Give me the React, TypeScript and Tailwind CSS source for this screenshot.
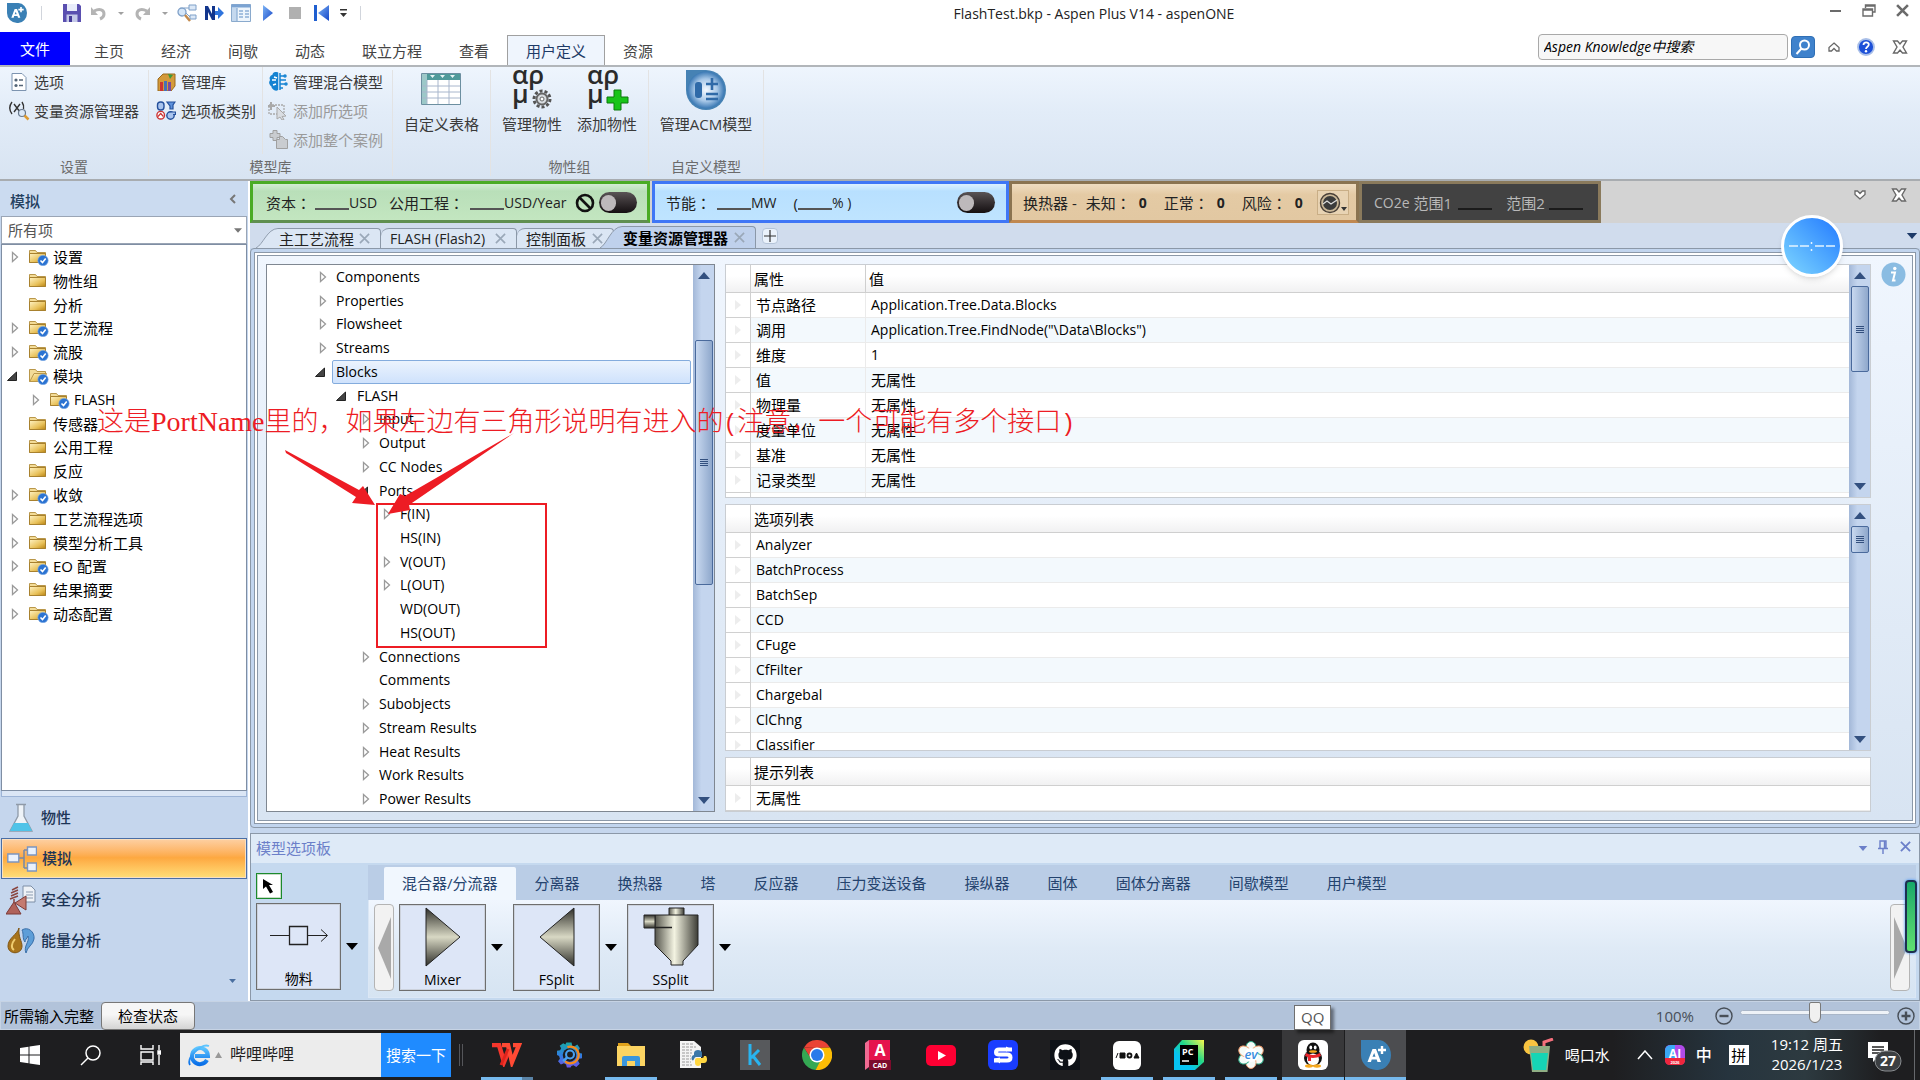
import type { ReactNode } from "react";
import clsx from "clsx";
import { FaGithub } from "react-icons/fa";

interface TreeNode {
  label: string;
  level: number;
  state?: "closed" | "open";
  checked?: boolean;
  selected?: boolean;
}

const ribbonTabs = ["主页", "经济", "间歇", "动态", "联立方程", "查看", "用户定义", "资源"];

const navTree: TreeNode[] = [
  { label: "设置", level: 0, state: "closed", checked: true },
  { label: "物性组", level: 0 },
  { label: "分析", level: 0 },
  { label: "工艺流程", level: 0, state: "closed", checked: true },
  { label: "流股", level: 0, state: "closed", checked: true },
  { label: "模块", level: 0, state: "open", checked: true },
  { label: "FLASH", level: 1, state: "closed", checked: true },
  { label: "传感器", level: 0 },
  { label: "公用工程", level: 0 },
  { label: "反应", level: 0 },
  { label: "收敛", level: 0, state: "closed", checked: true },
  { label: "工艺流程选项", level: 0, state: "closed" },
  { label: "模型分析工具", level: 0, state: "closed" },
  { label: "EO 配置", level: 0, state: "closed", checked: true },
  { label: "结果摘要", level: 0, state: "closed" },
  { label: "动态配置", level: 0, state: "closed", checked: true },
];

const variableTree: TreeNode[] = [
  { label: "Components", level: 0, state: "closed" },
  { label: "Properties", level: 0, state: "closed" },
  { label: "Flowsheet", level: 0, state: "closed" },
  { label: "Streams", level: 0, state: "closed" },
  { label: "Blocks", level: 0, state: "open", selected: true },
  { label: "FLASH", level: 1, state: "open" },
  { label: "Input", level: 2, state: "closed" },
  { label: "Output", level: 2, state: "closed" },
  { label: "CC Nodes", level: 2, state: "closed" },
  { label: "Ports", level: 2, state: "open" },
  { label: "F(IN)", level: 3, state: "closed" },
  { label: "HS(IN)", level: 3 },
  { label: "V(OUT)", level: 3, state: "closed" },
  { label: "L(OUT)", level: 3, state: "closed" },
  { label: "WD(OUT)", level: 3 },
  { label: "HS(OUT)", level: 3 },
  { label: "Connections", level: 2, state: "closed" },
  { label: "Comments", level: 2 },
  { label: "Subobjects", level: 2, state: "closed" },
  { label: "Stream Results", level: 2, state: "closed" },
  { label: "Heat Results", level: 2, state: "closed" },
  { label: "Work Results", level: 2, state: "closed" },
  { label: "Power Results", level: 2, state: "closed" },
];

const properties = [
  ["节点路径", "Application.Tree.Data.Blocks"],
  ["调用", 'Application.Tree.FindNode("\\Data\\Blocks")'],
  ["维度", "1"],
  ["值", "无属性"],
  ["物理量", "无属性"],
  ["度量单位", "无属性"],
  ["基准", "无属性"],
  ["记录类型", "无属性"],
];

const options = [
  "Analyzer",
  "BatchProcess",
  "BatchSep",
  "CCD",
  "CFuge",
  "CfFilter",
  "Chargebal",
  "ClChng",
  "Classifier",
];

const paletteTabs = [
  "混合器/分流器",
  "分离器",
  "换热器",
  "塔",
  "反应器",
  "压力变送设备",
  "操纵器",
  "固体",
  "固体分离器",
  "间歇模型",
  "用户模型",
];

const navIndent = ["pl-[9px]", "pl-[30px]"];
const varIndent = ["pl-[52px]", "pl-[73px]", "pl-[95px]", "pl-[116px]"];

function SharedDefs() {
  return (
    <svg className="absolute size-0" aria-hidden="true">
      <defs>
        <linearGradient id="folder" x1="0" y1="0" x2="1" y2="1">
          <stop offset="0" stopColor="#fff3c4" />
          <stop offset="0.6" stopColor="#e8c15a" />
          <stop offset="1" stopColor="#b98412" />
        </linearGradient>
        <linearGradient id="metalV" x1="0" y1="0" x2="0" y2="1">
          <stop offset="0" stopColor="#2f2f2a" />
          <stop offset="0.5" stopColor="#d8d8c4" />
          <stop offset="1" stopColor="#2f2f2a" />
        </linearGradient>
        <linearGradient id="metalH" x1="0" y1="0" x2="1" y2="0">
          <stop offset="0" stopColor="#55554c" />
          <stop offset="0.45" stopColor="#f4f4e2" />
          <stop offset="1" stopColor="#3d3d36" />
        </linearGradient>
        <radialGradient id="acm">
          <stop offset="0" stopColor="#f4f9ff" />
          <stop offset="0.6" stopColor="#a8c8e8" />
          <stop offset="1" stopColor="#3a78b4" />
        </radialGradient>
        <linearGradient id="play" x1="0" y1="0" x2="1" y2="1">
          <stop offset="0" stopColor="#7db4f5" />
          <stop offset="1" stopColor="#1546c8" />
        </linearGradient>
        <linearGradient id="pycharm" x1="0" y1="1" x2="1" y2="0">
          <stop offset="0.3" stopColor="#07c3f2" />
          <stop offset="0.6" stopColor="#21d789" />
          <stop offset="1" stopColor="#fcf84a" />
        </linearGradient>
        <linearGradient id="gearBlue" x1="0" y1="0" x2="0" y2="24" gradientUnits="userSpaceOnUse">
          <stop offset="0" stopColor="#19a8a8" />
          <stop offset="0.5" stopColor="#2f7fe0" />
          <stop offset="1" stopColor="#6a55e8" />
        </linearGradient>
        <linearGradient id="ie" x1="0" y1="0" x2="0" y2="1">
          <stop offset="0" stopColor="#5cc4ff" />
          <stop offset="1" stopColor="#0a6fe8" />
        </linearGradient>
      </defs>
    </svg>
  );
}

function Expander({ state }: { state?: "closed" | "open" }) {
  return (
    <svg width="8" height="12" viewBox="0 0 8 12" className="shrink-0 overflow-visible">
      {state === "closed" && (
        <path d="M1.5 1.5 6.5 6 1.5 10.5Z" fill="#fff" stroke="#9a9a9a" strokeWidth="1.3" />
      )}
      {state === "open" && <path d="M5.5 2v8.5h-9Z" fill="#444" stroke="#222" />}
    </svg>
  );
}

function FolderIcon({ open, checked }: { open?: boolean; checked?: boolean }) {
  return (
    <svg width="20" height="18" viewBox="0 0 20 18" className="shrink-0">
      <path d="M.5 14.5v-12h6l1.5 2h8.5v10Z" fill="#f3dc98" stroke="#b9974a" />
      {open ? (
        <path d="M.8 14.5 5 6.5h12.5l-3 8Z" fill="url(#folder)" stroke="#b9974a" />
      ) : (
        <path d="M.5 14.5V5.5h16v9Z" fill="url(#folder)" stroke="#a8812e" />
      )}
      {checked && (
        <>
          <circle cx="14" cy="12.5" r="5.2" fill="#2b73d2" stroke="#8ab4e8" strokeWidth="0.6" />
          <path d="m11.5 12.5 2 2 3.2-4" fill="none" stroke="#fff" strokeWidth="1.6" />
        </>
      )}
    </svg>
  );
}

function Caret({ className }: { className?: string }) {
  return (
    <svg width="12" height="7" viewBox="0 0 12 7" className={clsx("shrink-0", className)}>
      <path d="M0 0h12L6 7Z" fill="currentColor" />
    </svg>
  );
}

function CrossIcon({ size, width, className }: { size: number; width: number; className?: string }) {
  return (
    <svg width={size} height={size} viewBox="0 0 12 12" className={clsx("shrink-0", className)}>
      <path d="M1 1 11 11M11 1 1 11" stroke="currentColor" strokeWidth={width} fill="none" />
    </svg>
  );
}

function OutlineCross() {
  return (
    <svg width="16" height="14" viewBox="0 0 16 14">
      <path
        d="M1.5 1H5.5L8 4 10.5 1h4L11 7l3.5 6h-4L8 10 5.5 13h-4L5 7Z"
        fill="#fff"
        stroke="#686868"
        strokeWidth="1.4"
      />
    </svg>
  );
}

function OutlineChevron({ down }: { down?: boolean }) {
  return (
    <svg width="12" height="10" viewBox="0 0 12 10" className={clsx(down && "rotate-180")}>
      <path
        d="M6 1 11 5.5V9H8.5L6 6.500 3.500 9H1V5.500Z"
        fill="#fff"
        stroke="#686868"
        strokeWidth="1.3"
      />
    </svg>
  );
}

function AspenLogo({ size }: { size: number }) {
  return (
    <svg width={size} height={size} viewBox="0 0 30 30">
      <path d="M0 0h17a13 15 0 0 1 0 30h-2A15 15 0 0 1 0 15Z" fill="#3a80b5" />
      <path d="M6.500 22 11.500 9h3.500L20 22h-3.500l-.8-2.500h-5L10 22Zm5-5.200h3L13.200 13Z" fill="#fff" />
      <path d="M21 6v8M17 10h8" stroke="#fff" strokeWidth="2.400" />
    </svg>
  );
}

function TitleBar() {
  const cell = "flex w-[27px] justify-center";
  return (
    <header className="grid h-8 grid-cols-[1fr_auto_1fr] items-start bg-white">
      <div className="flex h-[26px] items-center">
        <span className="ml-[7px]">
          <AspenLogo size={20} />
        </span>
        <span className="ml-3.5 h-3.5 w-px bg-gray-300" />
        <button className={clsx(cell, "ml-4")} aria-label="保存">
          <svg width="18" height="18" viewBox="0 0 18 18">
            <path d="M0 0h16l2 2v16H0Z" fill="#5a4fb0" />
            <path d="M4 0h10v7H4Z" fill="#e8ecfa" />
            <path d="M3.5 10.5h11V18h-11Z" fill="#c4c8e8" />
            <path d="M6 12h3v6H6Z" fill="#443a98" />
          </svg>
        </button>
        <button className={cell} aria-label="撤销">
          <svg width="15" height="15" viewBox="0 0 15 15">
            <path d="M3 5C9 2 13 4 13 8c0 2-1.500 4-4 5" fill="none" stroke="#b4b4b4" strokeWidth="3" />
            <path d="M0 1v8h7Z" fill="#b4b4b4" />
          </svg>
        </button>
        <span className="flex w-[17px] justify-center">
          <svg width="6" height="3"><path d="M0 0h6L3 3Z" fill="#a0a0a0" /></svg>
        </span>
        <button className={cell} aria-label="恢复">
          <svg width="15" height="15" viewBox="0 0 15 15">
            <path d="M12 5C6 2 2 4 2 8c0 2 1.500 4 4 5" fill="none" stroke="#b4b4b4" strokeWidth="3" />
            <path d="M15 1v8H8Z" fill="#b4b4b4" />
          </svg>
        </button>
        <span className="flex w-[17px] justify-center">
          <svg width="6" height="3"><path d="M0 0h6L3 3Z" fill="#a0a0a0" /></svg>
        </span>
        <button className={cell} aria-label="查找">
          <svg width="20" height="19" viewBox="0 0 20 19">
            <path d="M12 1h7v5h-7ZM13 11h6v4h-6Z" fill="#dbe8f7" stroke="#7fa0c8" />
            <path d="M7 4h5M9 9l4 4" stroke="#7fa0c8" />
            <circle cx="5" cy="8" r="4" fill="#d5e6f8" stroke="#7fa0c8" strokeWidth="1.3" />
            <path d="m8 11 5 6" stroke="#c48a4c" strokeWidth="2.5" />
          </svg>
        </button>
        <button className={cell} aria-label="下一步">
          <svg width="20" height="16" viewBox="0 0 20 16">
            <path d="M1 15V1h3l4 8V1h3v14H8L4 7v8Z" fill="#12358c" />
            <path d="M11 6h3V2l6 6-6 6v-4h-3Z" fill="#2f74dd" />
          </svg>
        </button>
        <button className={cell} aria-label="控制面板">
          <svg width="20" height="18" viewBox="0 0 20 18">
            <path d="M.5.5h19v17H.5Z" fill="#eef5fc" stroke="#8aaacd" />
            <path d="M.5.5h19v3H.5Z" fill="#7ba3d2" />
            <path d="M1 4h5v13H1Z" fill="#c4d8ee" />
            <path d="M6 4v13M8 7h4M8 10h4M8 13h4M14 7h4M14 10h4M14 13h4" stroke="#8fb0d6" strokeWidth="1.3" />
          </svg>
        </button>
        <button className={cell} aria-label="运行">
          <svg width="10" height="16" viewBox="0 0 10 16"><path d="M0 0v16l10-8Z" fill="url(#play)" /></svg>
        </button>
        <button className={cell} aria-label="停止">
          <svg width="12" height="12"><path d="M0 0h12v12H0Z" fill="#b0b0b0" /></svg>
        </button>
        <button className={cell} aria-label="重新初始化">
          <svg width="15" height="16" viewBox="0 0 15 16">
            <path d="M0 0h3v16H0Z" fill="#1f5fd0" />
            <path d="M15 0v16L4 8Z" fill="url(#play)" />
          </svg>
        </button>
        <button className="flex w-[17px] justify-center" aria-label="自定义">
          <svg width="7" height="8"><path d="M0 0h7v1.500H0ZM0 4h7L3.500 8Z" fill="#333" /></svg>
        </button>
        <span className="ml-2 h-3.5 w-px bg-gray-300" />
      </div>
      <h1 className="pt-1 pl-[268px] text-[14px] leading-5 text-[#222]">FlashTest.bkp - Aspen Plus V14 - aspenONE</h1>
      <div className="flex h-5 items-center justify-end gap-[19px] pr-[11px] text-[#6b6b6b]">
        <button aria-label="最小化">
          <svg width="12" height="12"><path d="M0 6h11v2H0Z" fill="currentColor" /></svg>
        </button>
        <button aria-label="还原" className="mx-px">
          <svg width="14" height="13" viewBox="0 0 14 13" fill="none" stroke="currentColor" strokeWidth="1.4">
            <path d="M3.5 4V1h9.500v7h-3M3.500 2h9.500M1 5h9.500v7H1ZM1 6h9.500" />
          </svg>
        </button>
        <button aria-label="关闭">
          <CrossIcon size={13} width={2.4} />
        </button>
      </div>
    </header>
  );
}

function TabStrip() {
  return (
    <div className="flex h-[33px] bg-white">
      <button className="w-[70px] bg-[#0000ff] text-[15px] leading-[35px] text-white">文件</button>
      <nav className="flex items-end gap-px pl-[5px]">
        {ribbonTabs.map((tab) => (
          <button
            key={tab}
            className={clsx(
              "-mr-0.5 h-[30px] border border-b-0 px-[18px] text-[15px] leading-7",
              tab === "用户定义"
                ? "border-[#a0a0a0] bg-[#eff5fd] text-[#1e3a66]"
                : "border-transparent text-[#444]",
            )}
          >
            {tab}
          </button>
        ))}
      </nav>
      <div className="ml-auto flex items-center pr-3">
        <input
          aria-label="Aspen Knowledge中搜索"
          placeholder="Aspen Knowledge中搜索"
          className="mb-1 h-[26px] w-[250px] rounded-sm border border-[#a9a9a9] bg-[#f7f7f7] px-[5px] text-[14px] italic placeholder:text-black"
        />
        <button
          aria-label="搜索"
          className="mb-1 ml-[3px] flex h-[22px] w-6 items-center justify-center rounded-sm border border-[#2f6fb5] bg-[#3f82cc]"
        >
          <svg width="16" height="16" viewBox="0 0 16 16" fill="none" stroke="#fff" strokeWidth="2">
            <circle cx="9.5" cy="6" r="4.5" />
            <path d="M6.5 9.5 1.5 15" />
          </svg>
        </button>
        <button aria-label="折叠功能区" className="mb-1 ml-[13px]">
          <OutlineChevron />
        </button>
        <button aria-label="帮助" className="mb-1 ml-[17px]">
          <svg width="18" height="18" viewBox="0 0 18 18">
            <circle cx="9" cy="9" r="8" fill="#1d50d8" stroke="#a9bfe8" strokeWidth="1.8" />
            <path d="M6.5 7c0-3.500 5.500-3.300 5.300-.3C11.700 8.700 9 8.700 9 11" fill="none" stroke="#fff" strokeWidth="1.8" />
            <circle cx="9" cy="13.3" r="1.2" fill="#fff" />
          </svg>
        </button>
        <button aria-label="关闭文档" className="mb-1 ml-[17px]">
          <OutlineCross />
        </button>
      </div>
    </div>
  );
}

function RibbonItem({ icon, label, disabled }: { icon: ReactNode; label: string; disabled?: boolean }) {
  return (
    <button
      disabled={disabled}
      className={clsx("flex h-[29px] items-center gap-[5px] leading-5", disabled ? "text-[#9a9a9a]" : "text-[#3a3a3a]")}
    >
      <span className="flex w-5 justify-center">{icon}</span>
      {label}
    </button>
  );
}

function RibbonBig({ icon, label }: { icon: ReactNode; label: string }) {
  return (
    <button className="flex flex-col items-center leading-5 text-[#3a3a3a]">
      <span className="flex h-11 items-start">{icon}</span>
      {label}
    </button>
  );
}

function RibbonGroup({ label, className, children }: { label?: string; className: string; children: ReactNode }) {
  return (
    <section className={clsx("my-[3px] flex flex-col border-r border-[#e3e3e3]", className)}>
      <div className="min-h-0 flex-1">{children}</div>
      <p className="h-[19px] text-center text-[14px] leading-5 text-[#6b6b6b]">{label}</p>
    </section>
  );
}

function PropertyGlyph({ children }: { children: ReactNode }) {
  return (
    <svg width="42" height="42" viewBox="0 0 42 42" className="overflow-visible">
      <text x="1" y="14" fontFamily="Open Sans" fontWeight="600" fontSize="26" fill="#2b2b2b">αρ</text>
      <text x="1" y="33" fontFamily="Open Sans" fontWeight="600" fontSize="26" fill="#2b2b2b">μ</text>
      {children}
    </svg>
  );
}

function Ribbon() {
  return (
    <div className="flex h-[116px] border-y-2 border-t-[#b2b6ba] border-b-[#a8acb0] bg-linear-to-b from-[#eef5fd] via-[#e2ecf8] via-40% to-[#d8e4f2] text-[15px]">
      <RibbonGroup label="设置" className="w-[149px]">
        <div className="-mt-[3px] flex flex-col items-start pl-[9px]">
          <RibbonItem
            label="选项"
            icon={
              <svg width="16" height="18" viewBox="0 0 16 18">
                <path d="M1 .5h10l4 4v13H1Z" fill="#fff" stroke="#7d94b0" />
                <circle cx="5" cy="7" r="1.6" fill="#567" />
                <circle cx="5" cy="12.5" r="1.6" fill="#567" />
                <path d="M8 7h4M8 12.500h4" stroke="#567" strokeWidth="1.6" />
              </svg>
            }
          />
          <RibbonItem
            label="变量资源管理器"
            icon={
              <svg width="20" height="18" viewBox="0 0 20 18" className="overflow-visible">
                <path d="M3 0C0 4 0 8 3 12M5 2l6 8M11 2l-6 8M13 0c2 3 2 5 1.500 7" fill="none" stroke="#333" strokeWidth="1.4" />
                <circle cx="13" cy="11" r="3.5" fill="#dce9f7" stroke="#68788c" strokeWidth="1.2" />
                <path d="m15.500 13.500 4 4" stroke="#dd9a30" strokeWidth="2.5" />
              </svg>
            }
          />
        </div>
      </RibbonGroup>

      <RibbonGroup label="模型库" className="w-[244px]">
        <div className="-mt-[3px] grid grid-cols-[114px_1fr]">
          <div className="flex flex-col items-start border-r border-[#e3e3e3] pl-[7px]">
            <RibbonItem
              label="管理库"
              icon={
                <svg width="19" height="18" viewBox="0 0 19 18">
                  <path d="M1 6 6 1h12v12l-4 5H1Z" fill="#d49a3a" stroke="#9b6a1c" />
                  <path d="M3 9h3v9H3Z" fill="#c33" />
                  <path d="M7 8h3v10H7Z" fill="#4670b8" />
                  <path d="M11 9h3v9h-3Z" fill="#7a4a9c" />
                  <path d="m11 1 5 1-3 4Z" fill="#3c9a3c" />
                </svg>
              }
            />
            <RibbonItem
              label="选项板类别"
              icon={
                <svg width="20" height="19" viewBox="0 0 20 19">
                  <rect x="1.500" y="1" width="6.500" height="8" rx="3" fill="#a9c4ee" stroke="#24509c" strokeWidth="1.4" />
                  <path d="M11 1h8l-2 3v4h-3V5Z" fill="#5f92dc" stroke="#24509c" strokeWidth="1.2" />
                  <circle cx="4.7" cy="14.2" r="3.8" fill="#fff" stroke="#c33" strokeWidth="1.4" />
                  <path d="m2 15.500 2.700-3 2.700 3" fill="none" stroke="#c33" strokeWidth="1.2" />
                  <circle cx="14.5" cy="14.5" r="3.7" fill="#a9c4ee" stroke="#24509c" strokeWidth="1.4" />
                  <path d="M14.500 11h5v2.500H17" fill="#a9c4ee" stroke="#24509c" strokeWidth="1.2" />
                </svg>
              }
            />
          </div>
          <div className="flex flex-col items-start pl-[5px]">
            <RibbonItem
              label="管理混合模型"
              icon={
                <svg width="19" height="19" viewBox="0 0 19 19" fill="none" stroke="#1583d2" strokeWidth="1.5">
                  <path d="M8.500 1C5 0 4 2 4 3.500 1 4 1 7 2 8c-2 2-1 5 1 6 0 3 4 5 5.500 3.500Z" fill="#1583d2" />
                  <path d="M3 8h4M5 5l3 1M4 13l3-1" stroke="#fff" />
                  <path d="M11 1v17M11 4h4M11 8h6M11 12h5M11 16h3" />
                  <circle cx="16" cy="4" r="1" />
                  <circle cx="17" cy="12" r="1" />
                </svg>
              }
            />
            <RibbonItem
              disabled
              label="添加所选项"
              icon={
                <svg width="20" height="19" viewBox="0 0 20 19" fill="none" stroke="#a9a9a9">
                  <path d="M1 4h15v9H1Z" strokeDasharray="2 1" strokeWidth="1.3" />
                  <path d="M3 1v8M0 5h7" strokeWidth="2" />
                  <path d="m9 6 9 9-4 .5 2 3-2 .5-2-3-3 2Z" fill="#d9dde2" />
                </svg>
              }
            />
            <RibbonItem
              disabled
              label="添加整个案例"
              icon={
                <svg width="19" height="19" viewBox="0 0 19 19" fill="#c9ccd0" stroke="#a0a0a0">
                  <path d="M4 .5h4v3h3v4H8v3H4v-3H1v-4h3Z" />
                  <path d="M7.500 9.500h3v-3h3l3 3h2v9h-11Z" />
                </svg>
              }
            />
          </div>
        </div>
      </RibbonGroup>

      <RibbonGroup className="w-[98px]">
        <div className="flex justify-center">
          <RibbonBig
            label="自定义表格"
            icon={
              <svg width="40" height="36" viewBox="0 0 40 36">
                <path d="M.5 3.500h39v31H.5Z" fill="#fff" stroke="#6c8fa0" />
                <path d="M1 4h38v6H1Z" fill="#4f9a9a" />
                <path d="M1 4h5v30H1Z" fill="#9cc8c8" />
                <path d="M9 5h5l-2.500 3ZM19 5h5l-2.500 3ZM29 5h5l-2.500 3Z" fill="#e8f4f4" />
                <path d="M6 10v24M17 10v24M28 10v24M1 16h38M1 22h38M1 28h38" stroke="#a8b6cc" />
              </svg>
            }
          />
        </div>
      </RibbonGroup>

      <RibbonGroup label="物性组" className="w-[158px]">
        <div className="flex justify-center gap-[15px]">
          <RibbonBig
            label="管理物性"
            icon={
              <PropertyGlyph>
                <circle cx="31" cy="29" r="8" fill="none" stroke="#555" strokeWidth="3" strokeDasharray="3 2" />
                <circle cx="31" cy="29" r="5.5" fill="#d8dce0" stroke="#666" strokeWidth="2" />
                <circle cx="31" cy="29" r="2" fill="#fff" stroke="#666" />
              </PropertyGlyph>
            }
          />
          <RibbonBig
            label="添加物性"
            icon={
              <PropertyGlyph>
                <path d="M28 20h7v7h7v6h-7v7h-7v-7h-7v-6h7Z" fill="#18c418" stroke="#0a7a0a" />
              </PropertyGlyph>
            }
          />
        </div>
      </RibbonGroup>

      <RibbonGroup label="自定义模型" className="w-[115px]">
        <div className="flex justify-center">
          <RibbonBig
            label="管理ACM模型"
            icon={
              <svg width="40" height="40" viewBox="0 0 40 40">
                <path d="M0 0h20a20 20 0 1 1-20 20Z" fill="#4682b4" />
                <circle cx="20" cy="20" r="18.5" fill="url(#acm)" />
                <rect x="9" y="12" width="7" height="16" rx="3" fill="#2f6aa8" />
                <path d="M26 8v12M20 14h12M20 24h12M20 29h12" stroke="#2f6aa8" strokeWidth="2.6" />
              </svg>
            }
          />
        </div>
      </RibbonGroup>
    </div>
  );
}

const navViews = [
  {
    label: "物性",
    icon: (
      <svg width="30" height="30" viewBox="0 0 30 30">
        <path d="M10 1.500h10M12 2v11L4 28h22l-8-15V2" fill="#eef3f8" stroke="#8f9aa8" strokeWidth="1.3" />
        <path d="M8 20h14l4 8H4Z" fill="#4fc3e8" />
      </svg>
    ),
  },
  {
    label: "模拟",
    icon: (
      <svg width="30" height="26" viewBox="0 0 30 26">
        <path d="M12 12h5M17 4v18M17 4h4M17 22h4" fill="none" stroke="#7688a8" strokeWidth="1.5" />
        <path d="M.8 8h11v8H.8ZM20.500 1h9v8h-9ZM20.500 17h9v8h-9Z" fill="#eaf1fc" stroke="#7c95c0" strokeWidth="1.4" />
      </svg>
    ),
  },
  {
    label: "安全分析",
    icon: (
      <svg width="30" height="30" viewBox="0 0 30 30">
        <path d="M17 1h8l4 4v12H17Z" fill="#eef2f7" stroke="#7d8ea6" />
        <path d="M20 7h7M20 10h7M20 13h7" stroke="#8a9bb0" />
        <path d="M0 29 8 17l7 12Z" fill="#b0625a" stroke="#7d3a36" />
        <path d="m9 18 11-7v14Z" fill="#c47a70" stroke="#7d3a36" />
        <path d="m8 17 0-3M4 14l8-3M5 11l7-3M5 8l7-3M6 5l6-3" stroke="#8a4640" strokeWidth="1.5" />
      </svg>
    ),
  },
  {
    label: "能量分析",
    icon: (
      <svg width="28" height="28" viewBox="0 0 28 28">
        <path d="M12 1C10 8 1 11 1 19c0 9 14 9 14 0 0-5-4-9-3-18Z" fill="#a8741c" stroke="#805410" />
        <path d="M8 12c-4 5-4 9-1 11" fill="none" stroke="#f0cc70" strokeWidth="2" />
        <path d="M15 3c6-4 13 2 12 9-1 6-7 8-8 14-3-7 4-11 2-17-1 3-3 3-3 6-3-4-1-8-3-12Z" fill="#5d9ed8" stroke="#3a6fa8" />
      </svg>
    ),
  },
];

function NavigationPane() {
  return (
    <aside className="flex w-[250px] shrink-0 flex-col border-r-2 border-white bg-[#c5d6ed] text-[15px]">
      <div className="flex h-[35px] items-center justify-between bg-[#cbdbf0] pr-3 pl-2.5 font-medium text-[#24405f]">
        <h2 className="pt-1.5">模拟</h2>
        <button aria-label="折叠">
          <svg width="7" height="10"><path d="M6 1 2 5l4 4" fill="none" stroke="#777" strokeWidth="2" /></svg>
        </button>
      </div>
      <div className="mx-px flex h-7 items-center border border-[#9aa5b5] bg-white">
        <select
          aria-label="筛选"
          className="w-full appearance-none bg-transparent pl-1.5 text-[15px] text-[#555] outline-none"
        >
          <option>所有项</option>
        </select>
        <Caret className="mr-1 h-[5px] w-2 text-[#777]" />
      </div>
      <div className="mx-px min-h-0 flex-1 overflow-hidden border border-[#7f8ea3] bg-white">
        <ul className="grid h-[381px] auto-rows-fr">
          {navTree.map((node) => (
            <li key={node.label} className={clsx("flex items-center", navIndent[node.level])}>
              <Expander state={node.state} />
              <span className="ml-2.5">
                <FolderIcon open={node.label === "模块"} checked={node.checked} />
              </span>
              <span className={clsx("ml-1 leading-5", node.level > 0 && "text-[14px]")}>{node.label}</span>
            </li>
          ))}
        </ul>
      </div>
      <div className="mx-px h-1.5 border border-t-0 border-[#9db4d6] bg-[#dbe6f5]" />
      <nav>
        {navViews.map((view) => (
          <button
            key={view.label}
            className={clsx(
              "mx-px flex h-[41px] w-[246px] items-center gap-[5px] pl-[5px] font-medium text-[#1d3556]",
              view.label === "模拟" &&
                "border border-[#4a6ea5] bg-linear-to-b from-[#fdd0a2] via-[#fda840] via-48% to-[#fedf78] ring-1 ring-inset ring-[#fbe0c0]",
            )}
          >
            <span className="flex w-[30px] justify-center">{view.icon}</span>
            {view.label}
          </button>
        ))}
      </nav>
      <div className="flex h-10 items-center justify-end pr-3">
        <Caret className="h-1 w-[7px] text-[#4a6fa0]" />
      </div>
    </aside>
  );
}

function Blank({ className }: { className: string }) {
  return <span className={clsx("mt-[13px] h-0.5 w-[34px] shrink-0", className)} />;
}

// Name followed by a full-width colon that sits in the middle of its box
function KpiName({ children, className }: { children: string; className?: string }) {
  return (
    <span className={className}>
      {children}
      <span className="font-['Noto_Sans_CJK_TC',sans-serif]">：</span>
    </span>
  );
}

function Toggle({ label }: { label: string }) {
  return (
    <input
      type="checkbox"
      aria-label={label}
      className="flex h-[21px] w-[38px] shrink-0 appearance-none items-center rounded-full bg-linear-to-b from-[#5a5456] to-[#151012] before:ml-0.5 before:h-4 before:w-[15px] before:rounded-full before:bg-[#bdb9bb]"
    />
  );
}

function KpiBar() {
  return (
    <div className="flex h-[42px] bg-[#d3d3d3] text-[15px] leading-5 text-[#222]">
      <section className="flex w-[400px] items-center border-[3px] border-[#4aab25] border-b-[#5f8f50] bg-linear-to-b from-[#d3ecd3] via-[#b9dfb9] via-20% to-[#c3e6c0] pt-px pl-[13px]">
        <KpiName>资本</KpiName>
        <Blank className="ml-1 bg-[#555]" />
        <span className="text-[14px]">USD</span>
        <KpiName className="ml-3">公用工程</KpiName>
        <Blank className="ml-1.5 bg-[#555]" />
        <span className="text-[14px]">USD/Year</span>
        <svg width="20" height="20" viewBox="0 0 20 20" className="mr-1 ml-auto" fill="none" stroke="#111" strokeWidth="2.6">
          <circle cx="10" cy="10" r="8" />
          <path d="m4.500 4.500 11 11" />
        </svg>
        <span className="mr-2.5 flex">
          <Toggle label="经济分析" />
        </span>
      </section>
      <section className="ml-0.5 flex w-[357px] items-center border-[3px] border-[#3f76f6] bg-linear-to-b from-[#dcf0ff] via-[#b8e0ff] via-20% to-[#bfe4ff] pt-px pl-[11px]">
        <KpiName>节能</KpiName>
        <Blank className="ml-1.5 bg-[#555]" />
        <span className="text-[14px]">MW</span>
        <span className="ml-[17px]">(</span>
        <Blank className="bg-[#555]" />
        <span className="text-[14px]">% )</span>
        <span className="mr-[11px] ml-auto flex">
          <Toggle label="能量分析" />
        </span>
      </section>
      <section className="flex w-[350px] items-center border-[3px] border-[#8a7350] border-b-[#c08850] bg-linear-to-b from-[#efdcc0] via-[#e4caa4] via-30% to-[#e2c8a2] pt-px pl-[11px]">
        <span>换热器 -</span>
        <KpiName className="ml-[9px]">未知</KpiName>
        <b className="ml-2 w-2 text-[14px]">0</b>
        <KpiName className="ml-[17px]">正常</KpiName>
        <b className="ml-2 w-2 text-[14px]">0</b>
        <KpiName className="ml-[17px]">风险</KpiName>
        <b className="ml-2 w-2 text-[14px]">0</b>
        <button
          aria-label="换热器状态"
          className="mr-[7px] ml-auto flex h-[25px] w-8 items-center justify-center border border-[#c9ae86] bg-[#e8d3b3]"
        >
          <svg width="29" height="22" viewBox="0 0 29 22">
            <circle cx="11" cy="11" r="9.5" fill="#cbb898" stroke="#4a4038" strokeWidth="1.4" />
            <circle cx="11" cy="11" r="7" fill="#3b3b3b" />
            <path d="m4 12 4-3 4 3 6-4" fill="none" stroke="#ddd" strokeWidth="1.2" />
            <path d="M22 15h6l-3 4Z" fill="#333" />
          </svg>
        </button>
      </section>
      <section className="flex w-[242px] items-center border-[3px] border-[#8a7a5c] bg-[#424242] pt-px pl-3 text-[#b9b9b9]">
        <span className="text-[14px]">CO2e</span>
        <span className="ml-1">范围1</span>
        <Blank className="ml-1.5 bg-[#1b1b1b]" />
        <span className="ml-3.5">范围2</span>
        <Blank className="ml-1 bg-[#1b1b1b]" />
      </section>
      <div className="ml-auto flex items-start gap-[25px] pt-[7px] pr-[13px]">
        <button aria-label="展开" className="pt-0.5">
          <OutlineChevron down />
        </button>
        <button aria-label="关闭仪表板">
          <OutlineCross />
        </button>
      </div>
    </div>
  );
}

function DocTab({ label, active, slant, className }: { label: string; active?: boolean; slant?: boolean; className: string }) {
  const fill = active ? "#bfd1ec" : "#dbe6f4";
  return (
    <div className={clsx("flex items-end", active ? "relative h-[22px]" : "h-5", className)}>
      {slant && (
        <svg width="24" height="22" viewBox="0 0 24 22" preserveAspectRatio="none" className="h-full w-[22px] shrink-0">
          <path d="M0 22C8 18 12 1 24 .5V22Z" fill={fill} />
          <path d="M0 22C8 18 12 1 24 .5" fill="none" stroke="#8b98a8" strokeWidth="1" />
        </svg>
      )}
      <div
        className={clsx(
          "flex h-full flex-1 items-center justify-between rounded-tr-sm border-t border-r border-[#8b98a8] pr-2.5",
          active ? "bg-[#bfd1ec] font-bold text-black" : "bg-[#dbe6f4] text-[#222]",
          slant ? "pl-px" : "rounded-tl-lg pl-[9px]",
          label.startsWith("FLASH") ? "text-[14px]" : "text-[15px]",
        )}
      >
        <button className="leading-5 whitespace-nowrap">{label}</button>
        <button aria-label={`关闭 ${label}`}>
          <CrossIcon size={11} width={1.8} className="text-[#9aa8b8]" />
        </button>
      </div>
    </div>
  );
}

function DocTabs() {
  return (
    <div className="flex h-[25px] items-end bg-[#d0dced]">
      <DocTab label="主工艺流程" slant className="ml-1.5 w-[125px]" />
      <DocTab label="FLASH (Flash2)" className="w-[136px]" />
      <DocTab label="控制面板" className="w-[97px]" />
      <DocTab label="变量资源管理器" slant active className="-ml-3.5 w-[156px]" />
      <button
        aria-label="新建选项卡"
        className="mb-1 ml-1.5 flex size-4 items-center justify-center rounded-sm border border-[#b4c4d8] bg-[#eaf2fb] text-[#333]"
      >
        <svg width="12" height="12"><path d="M6 0v12M0 6h12" stroke="currentColor" strokeWidth="1.2" /></svg>
      </button>
      <Caret className="mr-0.5 mb-[9px] ml-auto h-1.5 w-3 text-[#1d3a68]" />
    </div>
  );
}

function ScrollBar({ thumb }: { thumb: string }) {
  return (
    <div className="flex w-[21px] shrink-0 flex-col items-center bg-linear-to-r from-[#a3b8d8] to-[#c4d5ee] to-40% text-[#33507f]">
      <div className="flex h-[21px] items-center">
        <Caret className="h-[7px] w-3 rotate-180" />
      </div>
      <div className="min-h-0 flex-1">
        <div
          className={clsx(
            "flex w-[18px] flex-col items-center justify-center gap-px rounded-xs border border-[#4a6a9c] bg-linear-to-r from-[#c8d8ef] to-[#8fa8cc]",
            thumb,
          )}
        >
          <span className="h-px w-2 bg-[#33507f]" />
          <span className="h-px w-2 bg-[#33507f]" />
          <span className="h-px w-2 bg-[#33507f]" />
          <span className="h-px w-2 bg-[#33507f]" />
        </div>
      </div>
      <div className="flex h-[21px] items-center">
        <Caret className="h-[7px] w-3" />
      </div>
    </div>
  );
}

function RowMarker() {
  return (
    <td className="border-r border-b border-[#d0d0d0] bg-white">
      <svg width="7" height="10" className="mx-auto"><path d="M0 0v10l6-5Z" fill="#ededed" /></svg>
    </td>
  );
}

const headCell = "border-b border-[#cfcfcf] bg-linear-to-b from-white from-40% to-[#f1f1f2] pl-[3px] text-left font-normal";

function PropertyTable() {
  return (
    <table className="w-full table-fixed border-separate border-spacing-0">
      <thead>
        <tr className="h-7">
          <th className={clsx(headCell, "w-[25px] border-r")} />
          <th className={clsx(headCell, "w-[115px] border-r")}>属性</th>
          <th className={headCell}>值</th>
        </tr>
      </thead>
      <tbody>
        {properties.map(([name, value]) => (
          <tr key={name} className="h-[25px] even:bg-[#f3f9fd]">
            <RowMarker />
            <td className="border-r border-b border-[#ebebeb] pl-[5px]">{name}</td>
            <td className={clsx("border-b border-[#ebebeb] pl-[5px]", value !== "无属性" && "text-[14px]")}>{value}</td>
          </tr>
        ))}
        <tr className="h-[25px]">
          <RowMarker />
          <td className="border-r border-[#ebebeb]" />
          <td />
        </tr>
      </tbody>
    </table>
  );
}

function ListTable({ title, rows }: { title: string; rows: string[] }) {
  return (
    <table className="w-full table-fixed border-separate border-spacing-0">
      <thead>
        <tr className="h-7">
          <th className={clsx(headCell, "w-[25px] border-r")} />
          <th className={headCell}>{title}</th>
        </tr>
      </thead>
      <tbody>
        {rows.map((row) => (
          <tr key={row} className="h-[25px] even:bg-[#f3f9fd]">
            <RowMarker />
            <td className={clsx("border-b border-[#ebebeb] pl-[5px]", row !== "无属性" && "text-[14px]")}>{row}</td>
          </tr>
        ))}
      </tbody>
    </table>
  );
}

function VariableExplorer() {
  return (
    <div className="flex min-h-0 flex-1 flex-col rounded-sm border border-[#8b98a8] bg-[#c2d5ee] p-[3px]">
      <div className="flex min-h-0 flex-1 flex-col border border-[#8b98a8] bg-white p-0.5">
        <div className="flex min-h-0 flex-1 border border-[#8b98a8] bg-linear-to-b from-[#f0f6fe] to-[#d8e4f2] py-2 pl-2 text-[15px] leading-5">
          <div className="flex w-[449px] shrink-0 overflow-hidden border border-[#7f8791] bg-white">
            <ul className="grid h-[546px] flex-1 auto-rows-fr text-[14px]">
              {variableTree.map((node) => (
                <li key={node.label} className={clsx("flex items-center", varIndent[node.level])}>
                  <Expander state={node.state} />
                  <span
                    className={clsx(
                      "mr-0.5 ml-[5px] flex h-full flex-1 items-center rounded-xs border pl-[3px]",
                      node.selected
                        ? "border-[#84acdd] bg-linear-to-b from-[#ebf3fd] to-[#cfe2fc]"
                        : "border-transparent",
                    )}
                  >
                    {node.label}
                  </span>
                </li>
              ))}
            </ul>
            <ScrollBar thumb="mt-[54px] h-[245px]" />
          </div>
          <div className="ml-2.5 flex min-w-0 flex-1 flex-col gap-1.5">
            <div className="flex h-[234px] overflow-hidden border border-[#c9cdd2] bg-white">
              <div className="min-w-0 flex-1">
                <PropertyTable />
              </div>
              <ScrollBar thumb="h-[86px]" />
            </div>
            <div className="flex min-h-0 flex-1 overflow-hidden border border-[#c9cdd2] bg-white">
              <div className="min-w-0 flex-1">
                <ListTable title="选项列表" rows={options} />
              </div>
              <ScrollBar thumb="h-[27px]" />
            </div>
            <div className="h-[55px] overflow-hidden border border-[#c9cdd2] bg-white">
              <ListTable title="提示列表" rows={["无属性"]} />
            </div>
          </div>
          <div className="w-[41px] shrink-0">
            <button aria-label="信息" className="ml-2.5">
              <svg width="25" height="25" viewBox="0 0 25 25" className="-mt-0.5">
                <circle cx="12.5" cy="12.5" r="12" fill="#8abce2" />
                <circle cx="13.8" cy="6.5" r="1.7" fill="#fff" />
                <path d="M10 10.500h4l-2 8h2.500" fill="none" stroke="#fff" strokeWidth="2" />
              </svg>
            </button>
          </div>
        </div>
      </div>
    </div>
  );
}

function ModelTile({ label, children }: { label: string; children: ReactNode }) {
  return (
    <div className="flex items-center">
      <button className="flex size-[87px] flex-col items-center justify-between border border-[#6e6e6e] bg-[#dde6f7] pt-0.5 text-[14px] leading-5 ring-1 ring-inset ring-[#ccd2dc]">
        {children}
        {label}
      </button>
      <button aria-label={`${label} 图标`} className="ml-[5px] w-[22px]">
        <Caret className="text-black" />
      </button>
    </div>
  );
}

function ModelPalette() {
  return (
    <section className="mt-[5px] flex h-[168px] shrink-0 flex-col border border-[#8b98a8] bg-[#c5d9ef]">
      <div className="flex h-[29px] items-center bg-[#deeaf7] pr-2 pl-[5px] text-[15px] text-[#6b7fc9]">
        <h2>模型选项板</h2>
        <button aria-label="选项" className="mr-2.5 ml-auto">
          <Caret className="h-[5px] w-2.5" />
        </button>
        <button aria-label="固定" className="mr-3 mb-1">
          <svg width="10" height="14" viewBox="0 0 10 14" fill="none" stroke="currentColor" strokeWidth="1.4">
            <path d="M2 8V1h6v7M0 8.500h10M5 9v5M6.500 1v7" />
          </svg>
        </button>
        <button aria-label="关闭选项板" className="mb-1">
          <CrossIcon size={11} width={2} />
        </button>
      </div>
      <div className="flex min-h-0 flex-1">
        <div className="w-[117px] shrink-0 pt-2.5 pl-[5px]">
          <button
            aria-label="选择"
            className="mb-1 flex size-[26px] items-center justify-center border border-[#1c8a2c] bg-white ring-1 ring-inset ring-[#c8dcc8]"
          >
            <svg width="14" height="17" viewBox="0 0 14 17"><path d="M1 1v10l3-2.500L8 15.500l3-1.500-4-7h4Z" fill="#000" /></svg>
          </button>
          <ModelTile label="物料">
            <svg width="58" height="60" viewBox="0 0 58 60" fill="none" stroke="#222">
              <path d="M0 29.500h19M38 29.500h19M51 23.500l6.500 6-6.500 6" />
              <path d="M19.500 20.500h18v18h-18Z" strokeWidth="1.3" />
            </svg>
          </ModelTile>
        </div>
        <div className="mr-[3px] mb-0.5 flex min-w-0 flex-1 flex-col pt-0.5">
          <div className="flex h-[35px] items-end bg-[#bacde6] pl-4 text-[15px] text-[#24436e]">
            {paletteTabs.map((tab, i) => (
              <button
                key={tab}
                className={clsx("h-[33px] leading-[33px] whitespace-nowrap", i === 0 ? "rounded-t-xs bg-[#f1f7fe] px-[18px]" : "px-[19px]")}
              >
                {tab}
              </button>
            ))}
          </div>
          <div className="flex flex-1 items-start border border-t-0 border-[#dbe7f5] bg-linear-to-b from-[#f0f6fe] via-[#dfeaf6] to-[#d6e4f2] pt-1 pl-[5px]">
            <button
              aria-label="向左滚动"
              className="mr-[5px] flex h-[87px] w-5 items-center justify-center rounded-sm border border-[#b4b4b4] bg-[#f2f2f2]"
            >
              <svg width="13" height="62"><path d="M13 0v62L0 31Z" fill="#a9a9a9" /></svg>
            </button>
            <ModelTile label="Mixer">
              <svg width="36" height="60" viewBox="0 0 36 60">
                <path d="M1 1 35 30 1 59Z" fill="url(#metalV)" stroke="#222" />
              </svg>
            </ModelTile>
            <ModelTile label="FSplit">
              <svg width="36" height="60" viewBox="0 0 36 60">
                <path d="M35 1 1 30l34 29Z" fill="url(#metalV)" stroke="#222" />
              </svg>
            </ModelTile>
            <ModelTile label="SSplit">
              <svg width="56" height="60" viewBox="0 0 56 60" stroke="#222" fill="url(#metalH)">
                <path d="M26 1h15v8H26Z" />
                <path d="M12 8h43v30L40 54v4H28v-4L12 38Z" />
                <path d="M1 8h11v13H1Z" fill="url(#metalV)" />
                <path d="M12 20.500h17" strokeWidth="1.5" />
              </svg>
            </ModelTile>
            <button
              aria-label="向右滚动"
              className="mr-[5px] ml-auto flex h-[87px] w-5 items-center justify-center rounded-sm border border-[#b4b4b4] bg-[#f2f2f2]"
            >
              <svg width="13" height="62"><path d="M0 0v62L13 31Z" fill="#a9a9a9" /></svg>
            </button>
          </div>
        </div>
      </div>
    </section>
  );
}

function StatusBar() {
  return (
    <footer className="flex h-[29px] shrink-0 items-center bg-[#b2c3da] pr-[5px] pl-1 text-[15px] leading-5 ring-1 ring-inset ring-[#c6d3e4]">
      <span className="w-[97px]">所需输入完整</span>
      <button className="h-7 w-[94px] rounded-sm border border-[#777] bg-linear-to-b from-[#f6f6f6] from-45% to-[#d4d4d4]">
        检查状态
      </button>
      <div className="ml-auto flex items-center text-[#484f58]">
        <label htmlFor="zoom" className="mr-[21px] text-[15px]">100%</label>
        <button aria-label="缩小">
          <svg width="18" height="18" viewBox="0 0 18 18" fill="none" stroke="currentColor">
            <circle cx="9" cy="9" r="8" strokeWidth="1.4" />
            <path d="M4.500 9h9" strokeWidth="2.4" />
          </svg>
        </button>
        <input
          id="zoom"
          type="range"
          min={0}
          max={100}
          defaultValue={50}
          className="mx-[7px] mb-1.5 h-[5px] w-[150px] appearance-none rounded-full border border-[#a9b6c8] bg-[#eef2f7] [&::-webkit-slider-thumb]:h-[21px] [&::-webkit-slider-thumb]:w-3 [&::-webkit-slider-thumb]:appearance-none [&::-webkit-slider-thumb]:rounded-t-xs [&::-webkit-slider-thumb]:rounded-b-md [&::-webkit-slider-thumb]:border [&::-webkit-slider-thumb]:border-[#7a7a7a] [&::-webkit-slider-thumb]:bg-[#f0f0f0]"
        />
        <button aria-label="放大">
          <svg width="18" height="18" viewBox="0 0 18 18" fill="none" stroke="currentColor">
            <circle cx="9" cy="9" r="8" strokeWidth="1.4" />
            <path d="M4.500 9h9M9 4.500v9" strokeWidth="2.4" />
          </svg>
        </button>
      </div>
    </footer>
  );
}

interface TaskApp {
  name: string;
  icon: ReactNode;
  bar?: "part" | "split" | "hover" | "active";
}

const petals = [0, 60, 120, 180, 240, 300];

const taskApps: TaskApp[] = [
  {
    name: "WPS",
    bar: "split",
    icon: (
      <svg width="30" height="24" viewBox="0 0 30 24" fill="none" strokeWidth="4.5">
        <path d="M0 2h7l5 17L17 7" stroke="#f5362c" />
        <path d="M10 2h6l4 17L27 2h-6" stroke="#ff4a34" />
        <path d="M9 22 16 6" stroke="#e0241c" strokeWidth="3" />
      </svg>
    ),
  },
  {
    name: "设置工具",
    icon: (
      <svg width="25" height="26" viewBox="0 0 24 24">
        <path
          d="M9 0h5l.6 3 2 .8L19.500 2 22 5.500 20.500 8l.7 2 2.800.6v4.400l-2.800.6-1 2 1.600 2.800-3.300 3-2.700-1.600-2 .8L13 24H9.500l-.8-3-2-1-3 1.200L1 18l1.800-2.500L2 13l-2-1V8l3-.6 1-2L2.600 3 6 .800 8 2Z"
          fill="url(#gearBlue)"
        />
        <circle cx="12" cy="12" r="6.5" fill="#1e1e20" />
        <path d="M10 4.500a8 8 0 1 1-3 13" fill="none" stroke="#f58a1e" strokeWidth="2.2" />
        <circle cx="12.5" cy="11.5" r="3.8" fill="none" stroke="#48a0f0" strokeWidth="2" />
        <path d="m10 14-4 4" stroke="#48a0f0" strokeWidth="2.5" />
      </svg>
    ),
  },
  {
    name: "文件资源管理器",
    bar: "part",
    icon: (
      <svg width="28" height="24" viewBox="0 0 28 24">
        <path d="M1 0h10l3 3H1Z" fill="#e0a21c" />
        <path d="M0 3h28v20H0Z" fill="#fcd462" />
        <path d="M5 23V15q0-2 2-2h14q2 0 2 2v8h-5v-5h-8v5Z" fill="#3a96dd" />
      </svg>
    ),
  },
  {
    name: "Python",
    icon: (
      <svg width="28" height="28" viewBox="0 0 28 28">
        <path d="M1 0h14l7 6v21H1Z" fill="#f4f4f4" />
        <path d="M3 3h11M3 6h14M3 9h10M3 12h10M3 15h9M3 18h9M3 21h9M3 24h10" stroke="#9a9a9a" strokeDasharray="3 1" />
        <path d="M15 12c0-4 8-4 8 0v4h-6c-2 0-2 5-4 3-1-2 0-5 2-5Z" fill="#3b77a8" />
        <path d="M27 15c2 3 1 7-2 7h-3c0 4-6 4-6 0v-3q0-2 2-2h5q2 0 2-2Z" fill="#ffd640" />
      </svg>
    ),
  },
  {
    name: "KuGou",
    icon: (
      <svg width="30" height="30" viewBox="0 0 30 30">
        <path d="M0 0h30v30H0Z" fill="#57595c" />
        <path d="M10 4v21M19 10l-8 8M13 16l7 9" fill="none" stroke="#28b4f0" strokeWidth="3" />
      </svg>
    ),
  },
  {
    name: "Chrome",
    icon: (
      <svg width="30" height="30" viewBox="0 0 30 30">
        <path d="M2 7.500A15 15 0 0 1 28 7.500L15 8Z" fill="#ea4335" />
        <path d="M2 7.500A15 15 0 0 0 13.500 30L21 18.500 9 18.500Z" fill="#34a853" />
        <path d="M28 7.500A15 15 0 0 1 13.500 30L21.500 15 15 8Z" fill="#fbbc05" />
        <path d="M2 7.500 9 18.500 12 9 15 8Z" fill="#ea4335" />
        <circle cx="15" cy="15" r="7.5" fill="#fff" />
        <circle cx="15" cy="15" r="6" fill="#2a7bea" />
      </svg>
    ),
  },
  {
    name: "AutoCAD",
    icon: (
      <svg width="28" height="30" viewBox="0 0 28 30">
        <path d="M0 3 4 0v27l-4 3Z" fill="#f06a92" />
        <path d="M4 0h21v20H4Z" fill="#e5134d" />
        <path d="M4 20h22v10H4Z" fill="#7c0c2c" />
        <text x="15" y="16" textAnchor="middle" fontFamily="Open Sans" fontWeight="700" fontSize="16" fill="#fff">A</text>
        <text x="15" y="28" textAnchor="middle" fontFamily="Open Sans" fontWeight="700" fontSize="7" fill="#fff">CAD</text>
      </svg>
    ),
  },
  {
    name: "YouTube",
    icon: (
      <svg width="30" height="21" viewBox="0 0 30 21">
        <rect width="30" height="21" rx="5" fill="#ff0033" />
        <path d="M12 6v9l8-4.500Z" fill="#fff" />
      </svg>
    ),
  },
  {
    name: "Sider",
    icon: (
      <svg width="30" height="30" viewBox="0 0 30 30">
        <rect width="30" height="30" rx="6" fill="#1a3dff" />
        <path d="M24 9.500H11q-3 0-3 2.700 0 2.300 3 2.300h8q3.500 0 3.500 3T19 20.500H6" fill="none" stroke="#fff" strokeWidth="4" />
        <path d="m6 18.500 6-1v6ZM18 6.500l6 3-6 2Z" fill="#fff" />
      </svg>
    ),
  },
  {
    name: "GitHub",
    icon: (
      <span className="flex size-[30px] items-center justify-center bg-[#0d1117] text-white">
        <FaGithub size={23} />
      </span>
    ),
  },
  {
    name: "MOCA",
    bar: "part",
    icon: (
      <svg width="28" height="29" viewBox="0 0 28 29">
        <rect width="28" height="29" rx="6" fill="#fff" />
        <path d="m3 17 2-5M7 12h5v5H7ZM21 17l2.500-5 2.500 5Z" fill="#111" stroke="#111" />
        <circle cx="16.5" cy="14.5" r="2" fill="none" stroke="#111" strokeWidth="1.8" />
      </svg>
    ),
  },
  {
    name: "PyCharm",
    bar: "part",
    icon: (
      <svg width="30" height="30" viewBox="0 0 30 30">
        <path d="M8 0h22v22l-9 8H0V9Z" fill="url(#pycharm)" />
        <path d="M6 5h18v20H6Z" fill="#000" />
        <text x="8" y="15" fontFamily="Open Sans" fontWeight="700" fontSize="9" fill="#fff">PC</text>
        <path d="M8 21h7" stroke="#fff" strokeWidth="1.5" />
      </svg>
    ),
  },
  {
    name: "EV录屏",
    bar: "part",
    icon: (
      <svg width="30" height="28" viewBox="0 0 30 28">
        {petals.map((a) => (
          <ellipse
            key={a}
            cx="15"
            cy="6.5"
            rx="5"
            ry="6"
            fill="#f4fbf8"
            stroke={a % 120 ? "#f0a070" : "#2fae8a"}
            transform={`rotate(${a} 15 14)`}
          />
        ))}
        <circle cx="15" cy="14" r="7" fill="#fff" />
        <text x="15" y="18" textAnchor="middle" fontFamily="Open Sans" fontStyle="italic" fontWeight="600" fontSize="13" fill="#3a8ee0">ev</text>
      </svg>
    ),
  },
  {
    name: "QQ",
    bar: "hover",
    icon: (
      <svg width="30" height="30" viewBox="0 0 30 30">
        <rect width="30" height="30" rx="6" fill="#fff" />
        <ellipse cx="15" cy="18" rx="9" ry="8" fill="#111" />
        <ellipse cx="15" cy="10" rx="6.5" ry="7.5" fill="#111" />
        <ellipse cx="15" cy="19.5" rx="6" ry="6" fill="#fff" />
        <ellipse cx="12.8" cy="7.5" rx="1.4" ry="2" fill="#fff" />
        <ellipse cx="17.2" cy="7.5" rx="1.4" ry="2" fill="#fff" />
        <ellipse cx="15" cy="11.5" rx="4" ry="1.3" fill="#f7a81c" />
        <path d="M8 13q7 4 14 0l1 3q-8 4-16 0Z" fill="#e8252c" />
        <path d="M10 16h3v5h-3Z" fill="#e8252c" />
        <ellipse cx="11" cy="26" rx="4" ry="1.7" fill="#f7a81c" />
        <ellipse cx="19" cy="26" rx="4" ry="1.7" fill="#f7a81c" />
      </svg>
    ),
  },
  { name: "Aspen Plus", bar: "active", icon: <AspenLogo size={30} /> },
];

function TaskButton({ app }: { app: TaskApp }) {
  return (
    <button
      aria-label={app.name}
      className={clsx(
        "relative flex w-[62px] items-center justify-center",
        app.bar === "hover" && "bg-[#38383a]",
        app.bar === "active" && "border-l border-[#1e1e20] bg-[#4c4d50]",
      )}
    >
      {app.icon}
      {app.bar === "hover" && (
        <span role="tooltip" className="absolute -top-[25px] left-3 border border-[#6f6f6f] bg-white px-[6px] text-[15px] leading-[23px] text-[#555] shadow-[3px_3px_3px_rgba(0,0,0,0.45)]">
          QQ
        </span>
      )}
      {app.bar && (
        <span
          className={clsx(
            "absolute bottom-0 flex h-[3px] bg-[#76b9ed]",
            app.bar === "part" || app.bar === "split" ? "inset-x-[5px]" : "inset-x-0",
          )}
        >
          {app.bar === "split" && <span className="ml-auto w-[11px] bg-[#5a83a6]" />}
        </span>
      )}
    </button>
  );
}

function Taskbar() {
  return (
    <div className="flex h-[50px] shrink-0 bg-[linear-gradient(90deg,#1e1e20_84%,#26343e_90%,#2d3a40_94%,#1e1e20_98%)] text-[15px] leading-5 text-white">
      <button aria-label="开始" className="flex w-[60px] items-center justify-center">
        <svg width="20" height="20" viewBox="0 0 20 20" fill="#fff">
          <path d="M0 3l8.500-1.200v7.700H0ZM9.500 1.600 20 0v9.500H9.500ZM0 10.500h8.500v7.700L0 17ZM9.500 10.500H20V20L9.500 18.400Z" />
        </svg>
      </button>
      <button aria-label="搜索" className="flex w-[60px] items-center justify-center">
        <svg width="21" height="21" viewBox="0 0 21 21" fill="none" stroke="#fff" strokeWidth="1.5">
          <circle cx="13" cy="8" r="7" />
          <path d="M8 13 1 20" />
        </svg>
      </button>
      <button aria-label="任务视图" className="flex w-[60px] items-center justify-center">
        <svg width="21" height="20" viewBox="0 0 21 20" fill="none" stroke="#fff" strokeWidth="1.4">
          <path d="M1 0v4h12V0M1 7h12v8H1ZM1 20v-3h12v3M19 0v5M19 10v10" />
          <path d="M18 6h2.500v3H18Z" fill="#fff" />
        </svg>
      </button>
      <form className="my-[3px] flex">
        <label className="flex w-[201px] items-center bg-[#ececec] pl-2">
          <svg width="23" height="23" viewBox="0 0 23 23" fill="none">
            <path d="M19 16a8 8 0 1 1 1-4H7" stroke="url(#ie)" strokeWidth="4" />
            <path d="M2 21C-2 14 13-1 21 2" stroke="url(#ie)" strokeWidth="1.8" />
          </svg>
          <svg width="7" height="6" className="ml-1"><path d="M0 6h7L3.500 0Z" fill="#999" /></svg>
          <input
            aria-label="网页搜索"
            defaultValue="哔哩哔哩"
            className="mb-0.5 ml-2 w-[140px] bg-transparent text-[16px] text-[#222] outline-none"
          />
        </label>
        <button type="button" className="w-[70px] bg-[#1f8bff]">
          搜索一下
        </button>
      </form>
      <div className="mx-2 my-3.5 w-1 border-x border-[#55565a]" />
      <div className="ml-[5px] flex">
        {taskApps.map((app) => (
          <TaskButton key={app.name} app={app} />
        ))}
      </div>
      <div className="ml-auto flex items-center pr-[5px]">
        <button className="flex items-center gap-2.5">
          <svg width="32" height="35" viewBox="0 0 32 35">
            <circle cx="8" cy="9" r="7.5" fill="#f9c440" />
            <path d="M21 9V4l9-3" fill="none" stroke="#f56f7c" strokeWidth="3" />
            <path d="M6 8h21l-2.500 26H9Z" fill="#8fae84" />
            <path d="M8 15h17l-2 17H10Z" fill="#16d5b5" />
          </svg>
          喝口水
        </button>
        <button aria-label="显示隐藏的图标" className="ml-[27px]">
          <svg width="16" height="10"><path d="m1 9 7-8 7 8" fill="none" stroke="#fff" strokeWidth="1.5" /></svg>
        </button>
        <svg width="20" height="20" viewBox="0 0 20 20" className="ml-3">
          <rect width="20" height="20" rx="5" fill="#b04ae8" />
          <path d="M0 6q0-6 6-6h4v14H0Z" fill="#3aa8f5" />
          <path d="M0 13h20v2q0 5-5 5H5q-5 0-5-5Z" fill="#f0263c" />
          <text x="10" y="12.5" textAnchor="middle" fontFamily="Open Sans" fontWeight="700" fontSize="12" fill="#fff">AI</text>
          <text x="10" y="18.5" textAnchor="middle" fontFamily="Open Sans" fontWeight="700" fontSize="4" fill="#fff">2026</text>
        </svg>
        <span className="ml-[11px] text-[16px] font-medium">中</span>
        <span className="ml-[17px] flex size-5 items-center justify-center bg-white text-[15px] text-black">拼</span>
        <time className="ml-[22px] pb-0.5 text-center text-[15px]">
          19:12 周五
          <br />
          2026/1/23
        </time>
        <button aria-label="通知" className="mr-3 ml-[25px] flex items-center">
          <svg width="34" height="34" viewBox="0 0 34 34">
            <path d="M0 4h20v16H9l-4 4v-4H0Z" fill="#fff" />
            <path d="M4 9h12M4 12h12M4 15h8" stroke="#222" strokeWidth="1.3" />
            <rect x="7" y="13" width="26" height="20" rx="10" fill="#3c3f42" stroke="#8a8d90" />
            <text x="20" y="28" textAnchor="middle" fontFamily="Open Sans" fontWeight="700" fontSize="14" fill="#fff">27</text>
          </svg>
        </button>
        <span className="h-[50px] w-px bg-[#66686c]" />
      </div>
    </div>
  );
}

// Hand-drawn notes lying over the variable tree
function Annotations() {
  return (
    <div className="pointer-events-none absolute inset-0 text-[#ed1c24]">
      <p className="absolute top-[404px] left-[97px] font-['Liberation_Serif','Noto_Sans_CJK_SC',serif] text-[27px] leading-9 font-light whitespace-nowrap">
        这是<span className="text-[28px]">PortName</span>里的，如果左边有三角形说明有进入的
        <span className="font-['Liberation_Mono',monospace] text-[23px]">(</span>
        注意，一个可能有多个接口
        <span className="font-['Liberation_Mono',monospace] text-[23px]">)</span>
      </p>
      <svg width="240" height="90" viewBox="0 0 240 90" className="absolute top-[430px] left-[280px]" fill="currentColor">
        <path d="M5 20 6 23 76 67 72 73 95 75 83 56 79 60Z" />
        <path d="M234 3 125 66 120 64 108 84 130 80 129 75Z" />
      </svg>
      <div className="absolute top-[503px] left-[376px] h-[145px] w-[171px] border-2 border-current" />
    </div>
  );
}

function FloatingClock() {
  return (
    <div className="absolute top-[215px] right-[77px] flex size-[62px] items-center justify-center rounded-full border-[3px] border-white bg-linear-to-tr from-[#7fd6ff] to-[#2478ff] shadow-md">
      <svg width="46" height="12" viewBox="0 0 46 12" stroke="#e4f3ff" strokeWidth="1.5">
        <path d="M0 6h9M11 6h9M26 6h9M37 6h9M22.500 2v2M22.500 9v2" />
      </svg>
    </div>
  );
}

export default function App() {
  return (
    <div className="relative flex h-screen flex-col overflow-hidden bg-[#c5d6ed] font-['Open_Sans','Noto_Sans_CJK_SC',sans-serif] text-[15px] text-black">
      <SharedDefs />
      <TitleBar />
      <TabStrip />
      <Ribbon />
      <div className="flex min-h-0 flex-1">
        <NavigationPane />
        <main className="flex min-w-0 flex-1 flex-col">
          <KpiBar />
          <DocTabs />
          <VariableExplorer />
          <ModelPalette />
        </main>
      </div>
      <StatusBar />
      <Taskbar />
      <Annotations />
      <FloatingClock />
      <div className="absolute right-[3px] bottom-[127px] h-[73px] w-3 rounded-sm border-2 border-[#1d3050] bg-linear-to-b from-[#15a868] to-[#5fe070] shadow-[0_0_3px_#2f8bff]" />
    </div>
  );
}
